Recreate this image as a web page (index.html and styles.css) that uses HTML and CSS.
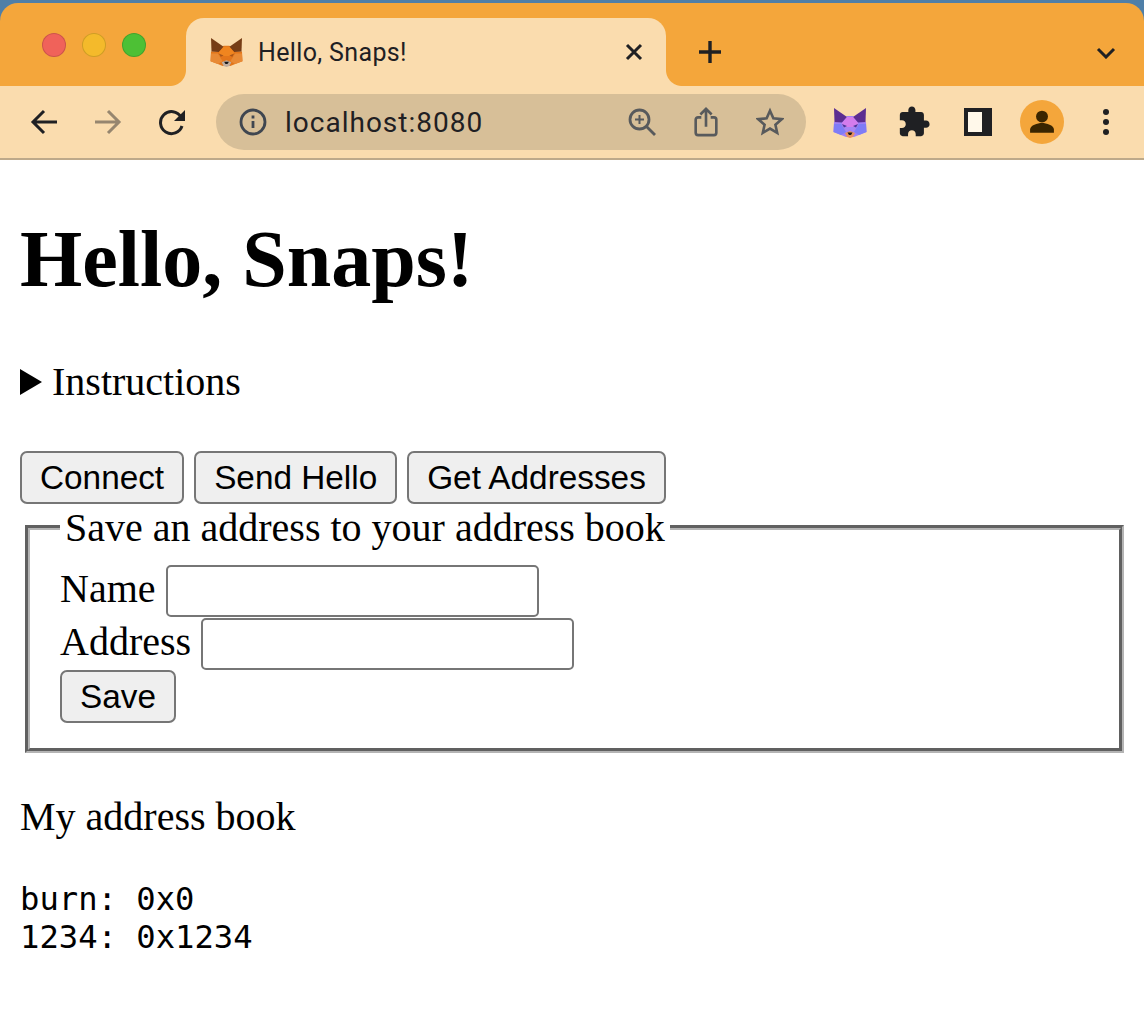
FILE: index.html
```html
<!DOCTYPE html>
<html lang="en">
<head>
  <meta charset="UTF-8">
  <meta name="viewport" content="width=device-width, initial-scale=1.0">
  <title>Hello, Snaps!</title>
  <link rel="stylesheet" href="styles.css">
</head>
<body>
  <svg class="sprites" width="0" height="0">
    <symbol id="fox" viewBox="0 0 34 31">
      <polygon class="fox-face" points="14,9 20,9 26,15 33,15 33.500,25 26,28 21,30 13,30 8,28 .5,25 1,15 8,15"/>
      <polygon class="fox-ear" points="1,1 14,10 9,15.500 1.500,15"/>
      <polygon class="fox-ear" points="33,1 20,10 25,15.500 32.500,15"/>
      <polygon class="fox-mid" points="14,10 20,10 25,16 24,20 10,20 9,16"/>
      <polygon class="fox-low" points="10,20 24,20 21,25 17,22 13,25"/>
      <polygon class="fox-cheek" points="1,17 8,17 13,25 8,28 .5,25"/>
      <polygon class="fox-cheek" points="33,17 26,17 21,25 26,28 33.500,25"/>
      <polygon class="fox-eye" points="9,17 14,19 11,20.500"/>
      <polygon class="fox-eye" points="25,17 20,19 23,20.500"/>
      <polygon class="fox-chin" points="12,26 17,24 22,26 20,30 17,31 14,30"/>
      <polygon class="fox-nose" points="14.500,25.500 19.500,25.500 18,28 16,28"/>
    </symbol>
  </svg>

  <header class="browser">
    <div class="tabstrip">
      <div class="traffic">
        <span class="light light-red"></span>
        <span class="light light-yellow"></span>
        <span class="light light-green"></span>
      </div>
      <div class="tab">
        <svg class="favicon fox-orange"><use href="#fox"/></svg>
        <span class="tab-title">Hello, Snaps!</span>
        <svg class="tab-close" viewBox="0 0 20 20"><path d="M3 3l14 14M17 3L3 17"/></svg>
      </div>
      <svg class="new-tab" viewBox="0 0 24 24"><path d="M12 1v22M1 12h22"/></svg>
      <svg class="tab-menu" viewBox="0 0 20 12"><path d="M2 2l8 8 8-8"/></svg>
    </div>

    <div class="toolbar">
      <span class="tool"><svg class="icon" viewBox="0 0 28 28"><path d="M27 14H3M14 3L3 14l11 11"/></svg></span>
      <span class="tool tool-off"><svg class="icon" viewBox="0 0 28 28"><path d="M1 14h24M14 3l11 11-11 11"/></svg></span>
      <span class="tool"><svg class="icon" viewBox="0 0 28 28"><path d="M24 18a11 11 0 1 1-1-9"/><path class="solid" d="M27 2v11H16z"/></svg></span>

      <div class="omnibox">
        <svg class="omni-info" viewBox="0 0 28 28"><circle cx="14" cy="14" r="12"/><path d="M14 13v7"/><path d="M14 7.500v3"/></svg>
        <span class="url">localhost:8080</span>
        <div class="omni-actions">
          <span class="omni-tool"><svg class="omni-icon" viewBox="0 0 28 28"><circle cx="11.500" cy="11.500" r="9.500"/><path d="M18.500 18.500L27 27"/><path class="thin" d="M11.500 7v9M7 11.500h9"/></svg></span>
          <span class="omni-tool"><svg class="omni-icon" viewBox="0 0 28 32"><path d="M9 11H5.500A2.500 2.500 0 0 0 3 13.500v14A2.500 2.500 0 0 0 5.500 30h17a2.500 2.500 0 0 0 2.500-2.500v-14a2.500 2.500 0 0 0-2.500-2.500H19M14 21V2M8 8l6-6 6 6"/></svg></span>
          <span class="omni-tool"><svg class="omni-icon" viewBox="0 0 30 30"><path d="M15 3l3.600 8.100 8.900.9-6.700 5.900 1.900 8.700-7.700-4.500-7.700 4.500 1.900-8.700L2.500 12l8.900-.9z"/></svg></span>
        </div>
      </div>

      <div class="extensions">
        <span class="tool"><svg class="ext-fox fox-purple"><use href="#fox"/></svg></span>
        <span class="tool"><svg class="ext-puzzle" viewBox="0 0 24 24"><path d="M20.500 11H19V7c0-1.100-.9-2-2-2h-4V3.500C13 2.120 11.880 1 10.500 1S8 2.120 8 3.500V5H4c-1.100 0-1.990.9-1.990 2v3.800H3.500c1.490 0 2.700 1.210 2.700 2.700s-1.210 2.700-2.700 2.700H2V20c0 1.100.9 2 2 2h3.800v-1.500c0-1.490 1.210-2.700 2.700-2.700 1.490 0 2.700 1.210 2.700 2.700V22H17c1.100 0 2-.9 2-2v-4h1.500c1.380 0 2.500-1.120 2.500-2.500S21.880 11 20.500 11z"/></svg></span>
        <span class="tool"><span class="side-panel"></span></span>
        <span class="tool"><span class="avatar"><svg class="avatar-icon" viewBox="0 0 24 24"><circle cx="12" cy="7" r="5.500"/><path d="M1 22v-3c0-4 7-6 11-6s11 2 11 6v3z"/></svg></span></span>
        <span class="tool"><span class="dots"><i></i><i></i><i></i></span></span>
      </div>
    </div>
  </header>

  <main class="page">
    <h1>Hello, Snaps!</h1>

    <details>
      <summary>Instructions</summary>
    </details>

    <div class="actions">
      <button type="button">Connect</button>
      <button type="button">Send Hello</button>
      <button type="button">Get Addresses</button>
    </div>

    <form>
      <fieldset>
        <legend>Save an address to your address book</legend>
        <label for="name">Name</label>
        <input id="name" type="text"><br>
        <label for="address">Address</label>
        <input id="address" type="text"><br>
        <button type="button">Save</button>
      </fieldset>
    </form>

    <p>My address book</p>
    <pre>burn: 0x0
1234: 0x1234</pre>
  </main>
</body>
</html>
```

FILE: styles.css
```css
body {
  margin: 0;
  background: #fff;
  color: #000;
  font-family: "Liberation Serif", serif;
  font-size: 40px;
}

.sprites {
  display: block;
}

/* browser chrome */
.browser {
  background: #4f7fa8;
  padding-top: 3px;
  font-family: Roboto, "Liberation Sans", sans-serif;
  color: #1f2023;
}

.tabstrip {
  height: 83px;
  display: flex;
  align-items: flex-end;
  background: #f4a63b;
  border-radius: 18px 18px 0 0;
}

.traffic {
  width: 186px;
  height: 83px;
  box-sizing: border-box;
  padding: 30px 0 0 42px;
  display: flex;
  gap: 16px;
}

.light {
  width: 24px;
  height: 24px;
  box-sizing: border-box;
  border-radius: 50%;
  border: 1px solid rgba(0, 0, 0, .15);
}
.light-red { background: #f0625a; }
.light-yellow { background: #f4ba2b; }
.light-green { background: #4dc035; }

.tab {
  width: 480px;
  height: 68px;
  box-sizing: border-box;
  padding: 0 24px;
  position: relative;
  display: flex;
  align-items: center;
  background: #fadcae;
  border-radius: 18px 18px 0 0;
}

.tab::before,
.tab::after {
  content: "";
  position: absolute;
  bottom: 0;
  width: 16px;
  height: 16px;
}
.tab::before {
  left: -16px;
  background: radial-gradient(circle at 0 0, transparent 15.5px, #fadcae 16.5px);
}
.tab::after {
  right: -16px;
  background: radial-gradient(circle at 100% 0, transparent 15.5px, #fadcae 16.5px);
}

.favicon {
  width: 33px;
  height: 30px;
}

.tab-title {
  margin-left: 15px;
  font-size: 25px;
  letter-spacing: .35px;
}

.tab-close {
  width: 20px;
  height: 20px;
  margin-left: auto;
  margin-right: -2px;
  fill: none;
  stroke: #1f2023;
  stroke-width: 3;
}

.new-tab {
  width: 24px;
  height: 24px;
  margin: 0 0 22px 32px;
  fill: none;
  stroke: #1f2023;
  stroke-width: 3.400;
}

.tab-menu {
  width: 20px;
  height: 12px;
  margin: 0 0 27px 374px;
  fill: none;
  stroke: #1f2023;
  stroke-width: 3;
}

.toolbar {
  height: 74px;
  box-sizing: border-box;
  padding: 0 6px 0 12px;
  display: flex;
  align-items: center;
  background: #fadcae;
  border-bottom: 2px solid #bda98a;
}

.tool {
  width: 64px;
  height: 64px;
  flex: none;
  display: flex;
  align-items: center;
  justify-content: center;
}

.tool-off {
  opacity: .45;
}

.icon {
  width: 28px;
  height: 28px;
  fill: none;
  stroke: #1f2023;
  stroke-width: 3;
}
.icon .solid {
  fill: #1f2023;
  stroke: none;
}

.omnibox {
  width: 590px;
  height: 56px;
  margin-left: 12px;
  box-sizing: border-box;
  padding: 0 4px 0 23px;
  display: flex;
  align-items: center;
  background: #d7bf98;
  border-radius: 28px;
}

.omni-info {
  width: 28px;
  height: 28px;
  fill: none;
  stroke: #3f4650;
  stroke-width: 2.800;
}

.url {
  margin-left: 18px;
  font-size: 28px;
  letter-spacing: 1px;
}

.omni-actions {
  margin-left: auto;
  display: flex;
}

.omni-tool {
  width: 64px;
  display: flex;
  justify-content: center;
}

.omni-icon {
  width: 28px;
  height: 30px;
  fill: none;
  stroke: #585a5c;
  stroke-width: 2.800;
}
.omni-icon .thin {
  stroke-width: 2;
}

.extensions {
  margin-left: 12px;
  display: flex;
}

.ext-fox {
  width: 34px;
  height: 31px;
}
.fox-orange {
  --ear: #763d16;
  --face: #e2761b;
  --mid: #f0851f;
  --low: #e4761b;
  --cheek: #e88a35;
  --eye: #a9561a;
  --chin: #c0ad9e;
}
.fox-purple {
  --ear: #5c2d91;
  --face: #a080f4;
  --mid: #d47cec;
  --low: #a884f2;
  --cheek: #7f7cf6;
  --eye: #4a3a9c;
  --chin: #e89060;
}
.fox-face { fill: var(--face); }
.fox-ear { fill: var(--ear); }
.fox-mid { fill: var(--mid); }
.fox-low { fill: var(--low); }
.fox-cheek { fill: var(--cheek); }
.fox-eye { fill: var(--eye); }
.fox-chin { fill: var(--chin); }
.fox-nose { fill: #161616; }

.ext-puzzle {
  width: 34px;
  height: 34px;
  fill: #1f2023;
}

.side-panel {
  width: 28px;
  height: 28px;
  box-sizing: border-box;
  border: 4px solid #1f2023;
  border-right-width: 10px;
  background: #fff8ea;
}

.avatar {
  width: 44px;
  height: 44px;
  display: flex;
  align-items: center;
  justify-content: center;
  border-radius: 50%;
  background: #f4a63b;
}

.avatar-icon {
  width: 26px;
  height: 26px;
  fill: #3a2500;
}

.dots {
  display: flex;
  flex-direction: column;
  gap: 4px;
}
.dots i {
  width: 6px;
  height: 6px;
  border-radius: 50%;
  background: #1f2023;
}

/* page content */
.page {
  padding: 0 20px 20px;
}

h1 {
  font-size: 80px;
  margin: 53.600px 0;
}

summary {
  display: block;
  cursor: pointer;
}

summary::before {
  content: "";
  display: inline-block;
  margin-right: 10px;
  border-style: solid;
  border-width: 13px 0 13px 22px;
  border-color: transparent transparent transparent #000;
}

.actions {
  margin-top: 46px;
  height: 53px;
}

button {
  height: 53px;
  box-sizing: border-box;
  padding: 0 18px;
  font-family: "Liberation Sans", sans-serif;
  font-size: 33.330px;
  color: #000;
  background: #efefef;
  border: 2px solid #767676;
  border-radius: 7px;
}

fieldset {
  margin: 0 0 0 5px;
  width: 1099px;
  box-sizing: border-box;
  padding: 14px 30px 25px;
  border: 5px groove #b4b4b4;
  min-width: 0;
}

legend {
  padding: 0 5px;
}

input {
  width: 373px;
  height: 52px;
  margin-bottom: .5px;
  box-sizing: border-box;
  padding: 2px 5px;
  font-size: 33.330px;
  background: #fff;
  border: 2px solid #767676;
  border-radius: 5px;
}

p {
  margin: 40px 0;
}

pre {
  margin: 40px 0;
  font-family: "DejaVu Sans Mono", monospace;
  font-size: 32.200px;
  line-height: 38px;
}
```
